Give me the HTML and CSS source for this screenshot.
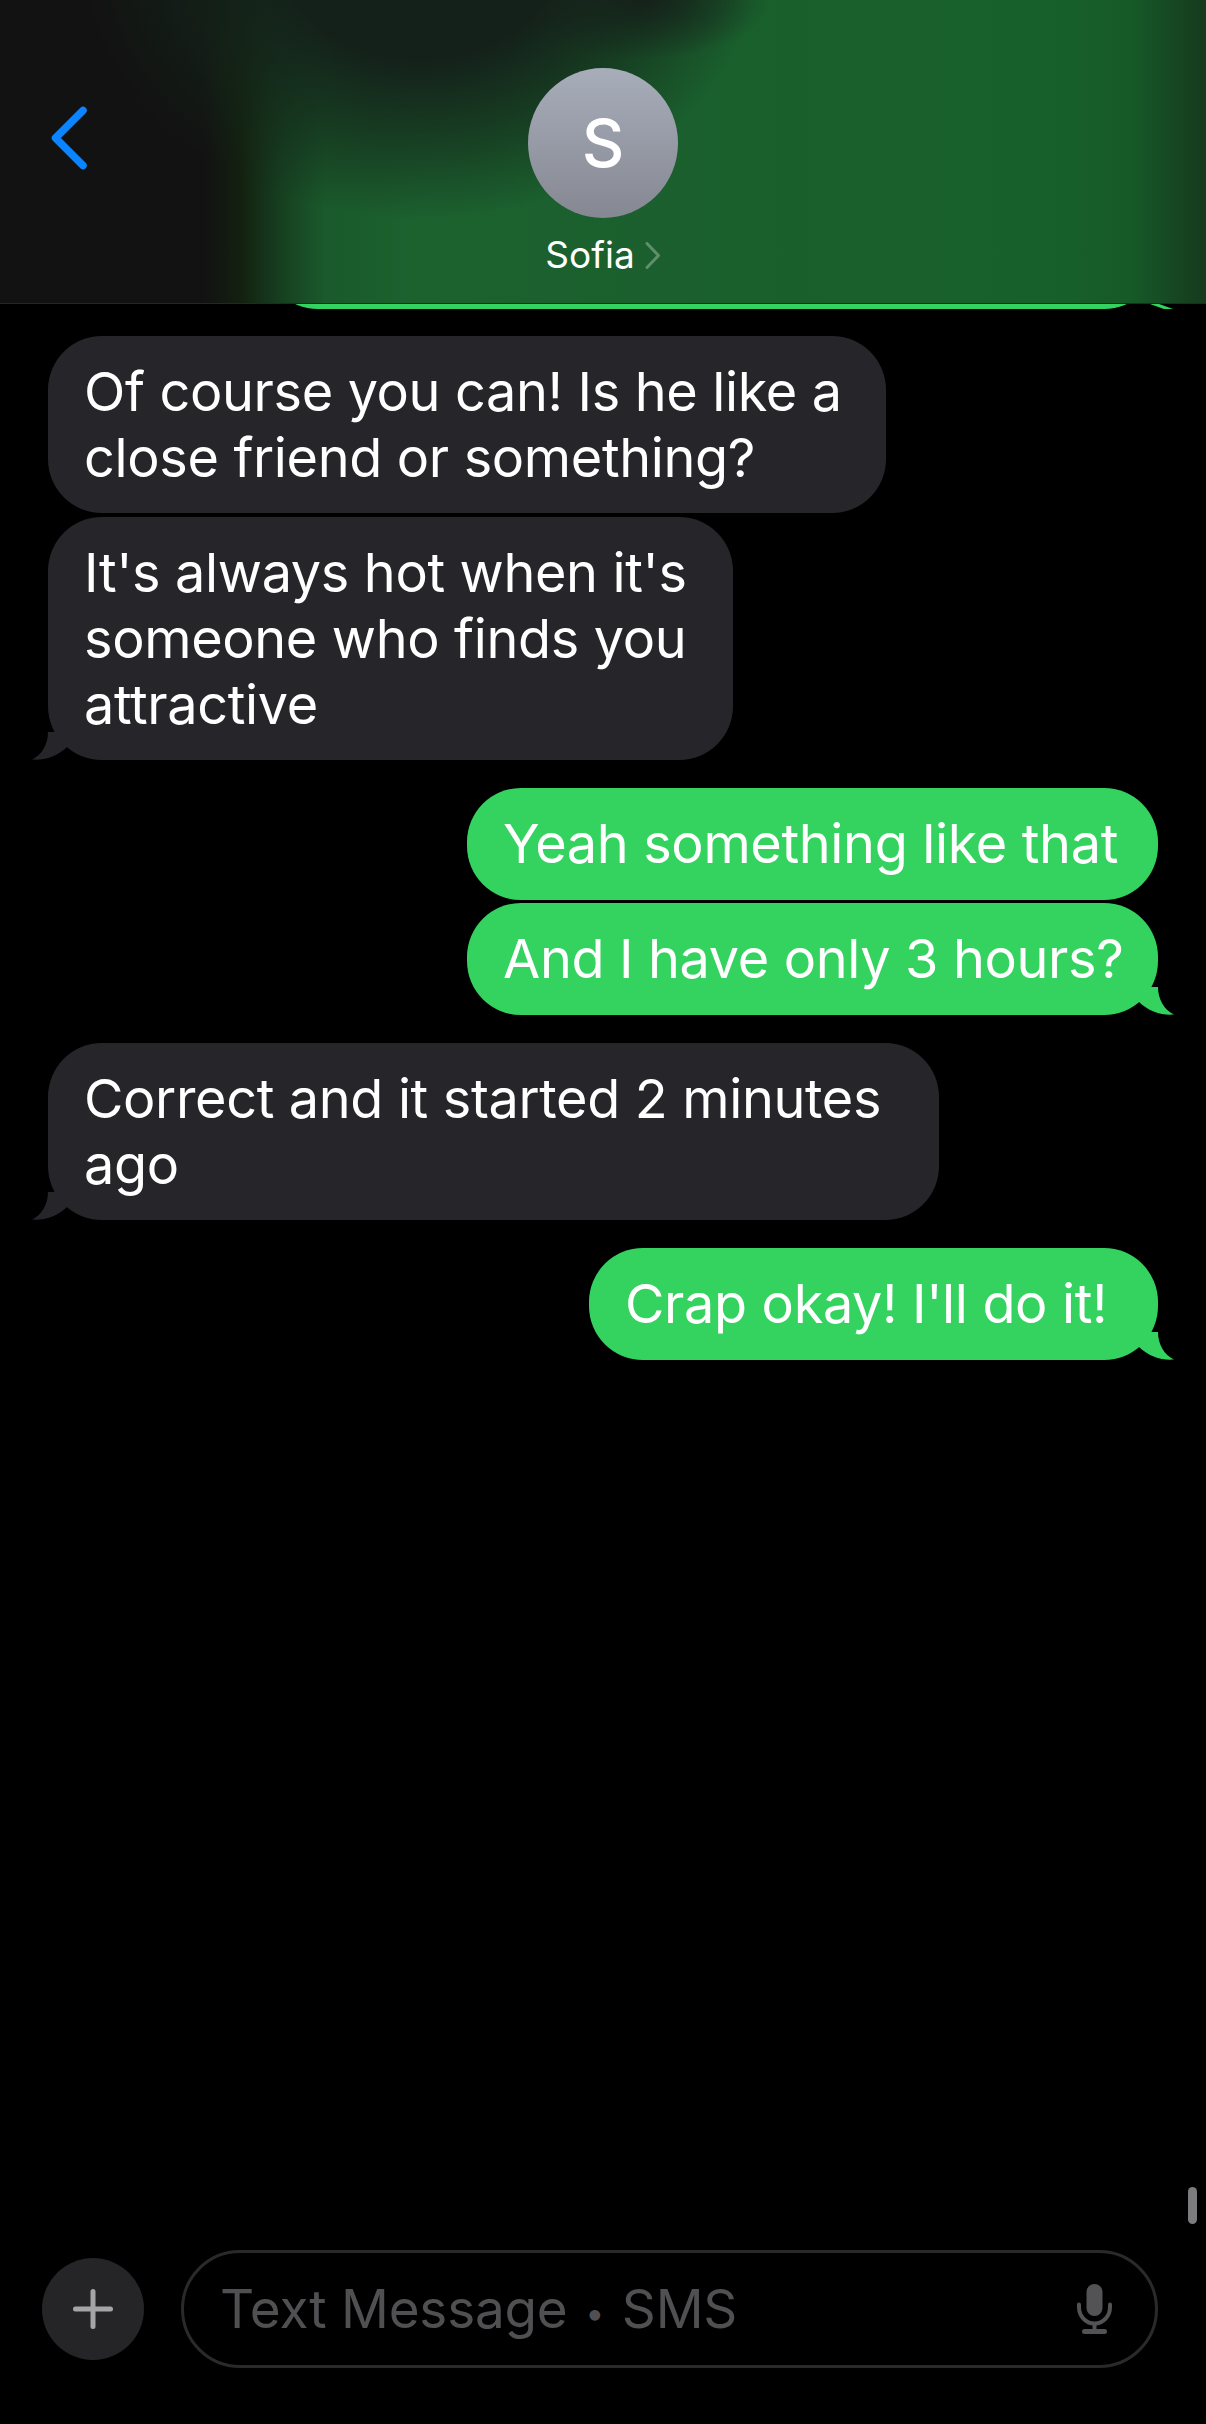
FILE: index.html
```html
<!DOCTYPE html>
<html>
  <head>
    <title>Sofia</title>
    <link rel="stylesheet" href="styles.css">
  </head>

  <body>
    <div id="screen">
      <div id="header">
        <svg class="back" width="40" height="64" viewBox="0 0 40 64">
          <path d="M34 4.5 L6.5 32 L34 59.5" fill="none" stroke="#0a84ff" stroke-width="7.5" stroke-linecap="round" stroke-linejoin="round"/>
        </svg>
        <div class="contact">
          <div class="avatar">S</div>
          <div class="name">
            Sofia
            <svg width="16" height="27" viewBox="0 0 16 27">
              <path d="M2 1.5 L13.5 13.5 L2 25.5" fill="none" stroke="#5f8f6c" stroke-width="3" stroke-linecap="round" stroke-linejoin="round"/>
            </svg>
          </div>
        </div>
      </div>

      <div id="messages">
        <!-- tail end of the previous bubble, scrolled under the header -->
        <div class="scrolled">
          <div class="scrolled-bubble"></div>
          <div class="scrolled-tail"></div>
        </div>

        <div class="group in first">
          <div class="bubble wide-a">Of course you can! Is he like a close friend or something?</div>
          <div class="bubble wide-b">
            It's always hot when it's someone who finds you attractive
            <svg class="tail" width="36" height="28" viewBox="0 0 36 28">
              <path d="M16 0 C16 12 10 23 0 27.5 C12 28.5 25 25 36 14 L36 0 Z" fill="#26262a"/>
            </svg>
          </div>
        </div>

        <div class="group out">
          <div class="bubble wide-d">Yeah something like that</div>
          <div class="bubble wide-d">
            And I have only 3 hours?
            <svg class="tail" width="36" height="28" viewBox="0 0 36 28">
              <path d="M20 0 C20 12 26 23 36 27.5 C24 28.5 11 25 0 14 L0 0 Z" fill="#34d35f"/>
            </svg>
          </div>
        </div>

        <div class="group in">
          <div class="bubble wide-c">
            Correct and it started 2 minutes ago
            <svg class="tail" width="36" height="28" viewBox="0 0 36 28">
              <path d="M16 0 C16 12 10 23 0 27.5 C12 28.5 25 25 36 14 L36 0 Z" fill="#26262a"/>
            </svg>
          </div>
        </div>

        <div class="group out">
          <div class="bubble wide-e">
            Crap okay! I'll do it!
            <svg class="tail" width="36" height="28" viewBox="0 0 36 28">
              <path d="M20 0 C20 12 26 23 36 27.5 C24 28.5 11 25 0 14 L0 0 Z" fill="#34d35f"/>
            </svg>
          </div>
        </div>
      </div>

      <div class="scrollbar"></div>

      <div id="composer">
        <div class="plus">
          <svg width="40" height="40" viewBox="0 0 40 40">
            <path d="M20 2.5 V37.5 M2.5 20 H37.5" fill="none" stroke="#a5a5a7" stroke-width="5" stroke-linecap="round"/>
          </svg>
        </div>
        <div class="input">
          <span class="placeholder">Text Message <span class="dot">•</span> SMS</span>
          <svg width="35" height="50" viewBox="0 0 35 50">
            <rect x="9.5" y="0" width="16" height="32" rx="8" fill="#535356"/>
            <path d="M2 20.5 V23 C2 32 8.5 39.5 17.5 39.5 C26.5 39.5 33 32 33 23 V20.5" fill="none" stroke="#535356" stroke-width="4" stroke-linecap="round"/>
            <path d="M17.5 39.5 V46" stroke="#535356" stroke-width="4"/>
            <rect x="5" y="45" width="25" height="5" rx="2.5" fill="#535356"/>
          </svg>
        </div>
      </div>
    </div>
  </body>
</html>
```

FILE: styles.css
```css
* {
  box-sizing: border-box;
}
body,
html {
  margin: 0;
  background: #000;
}
#screen {
  position: relative;
  width: 1206px;
  height: 2424px;
  display: flex;
  flex-direction: column;
  overflow: hidden;
  font-family: Inter, "Liberation Sans", sans-serif;
  color: #fff;
}

/* header */
#header {
  height: 304px;
  flex: none;
  display: flex;
  justify-content: center;
  padding-top: 68px;
  position: relative;
  border-bottom: 1px solid #262626;
  background:
    radial-gradient(ellipse 130px 60px at 640px 0px, #15211a 0%, rgba(21, 33, 26, 0) 100%),
    radial-gradient(ellipse 340px 270px at 420px -50px, #14201a 0%, #14201a 40%, rgba(20, 38, 26, 0.6) 70%, rgba(20, 38, 26, 0) 100%),
    linear-gradient(to right, #121212 0px, #121212 205px, #13200f 240px, #163f20 280px, #1a5a2b 325px, #1c622f 420px, #1a5f2d 700px, #17602b 1050px, #165a28 1130px, #163a1e 1206px);
}
.back {
  position: absolute;
  left: 49px;
  top: 106px;
}
.contact {
  display: flex;
  flex-direction: column;
  align-items: center;
}
.avatar {
  width: 150px;
  height: 150px;
  border-radius: 50%;
  background: linear-gradient(to bottom, #a8adba, #858892);
  display: flex;
  align-items: center;
  justify-content: center;
  font-size: 66px;
  font-weight: 500;
}
.name {
  margin-top: 15px;
  display: flex;
  align-items: center;
  gap: 10px;
  font-size: 37px;
  line-height: 44px;
}

/* messages */
#messages {
  flex: 1;
  display: flex;
  flex-direction: column;
  padding: 0 48px;
}
.scrolled {
  height: 5px;
  flex: none;
  position: relative;
  overflow: hidden;
  margin: 0 -48px;
}
.scrolled-bubble {
  position: absolute;
  left: 264px;
  right: 48px;
  bottom: 0;
  height: 60px;
  background: #34d35f;
  border-radius: 0 0 54px 54px;
}
.scrolled-tail {
  position: absolute;
  left: 1150px;
  width: 23px;
  bottom: 0;
  height: 5px;
  background: #34d35f;
  clip-path: polygon(0 0, 40% 0, 100% 100%, 60% 100%);
}
.group {
  display: flex;
  flex-direction: column;
  gap: 3.6px;
  margin-top: 28px;
}
.group.first {
  margin-top: 27px;
}
.group.in {
  align-items: flex-start;
}
.group.out {
  align-items: flex-end;
}
.bubble {
  position: relative;
  font-size: 54px;
  letter-spacing: -0.35px;
  line-height: 66px;
  padding: 23px 36px 22.4px;
  border-radius: 54px;
  background: #26262a;
}
.out .bubble {
  background: #34d35f;
  white-space: nowrap;
  padding-right: 0;
}
.wide-a {
  width: 838px;
}
.wide-b {
  width: 685px;
}
.wide-c {
  width: 891px;
}
.wide-d {
  width: 691px;
}
.wide-e {
  width: 569px;
}
.tail {
  position: absolute;
  bottom: 0;
}
.in .tail {
  left: -16px;
}
.out .tail {
  right: -16px;
}

.scrollbar {
  position: absolute;
  left: 1188px;
  top: 2187px;
  width: 9px;
  height: 37px;
  border-radius: 5px;
  background: #7c7c7e;
}

/* composer */
#composer {
  flex: none;
  display: flex;
  align-items: center;
  gap: 37px;
  padding: 0 48px 56px 42px;
}
.plus {
  width: 102px;
  height: 102px;
  flex: none;
  border-radius: 50%;
  background: #252527;
  display: flex;
  align-items: center;
  justify-content: center;
}
.input {
  flex: 1;
  height: 118px;
  border: 3px solid #2a2a2c;
  border-radius: 59px;
  display: flex;
  align-items: center;
  justify-content: space-between;
  padding: 0 43px 0 36px;
}
.placeholder {
  font-size: 53px;
  letter-spacing: -0.2px;
  color: #505053;
}
.dot {
  font-size: 34px;
  vertical-align: 3px;
  margin: 0 3px;
}
```
